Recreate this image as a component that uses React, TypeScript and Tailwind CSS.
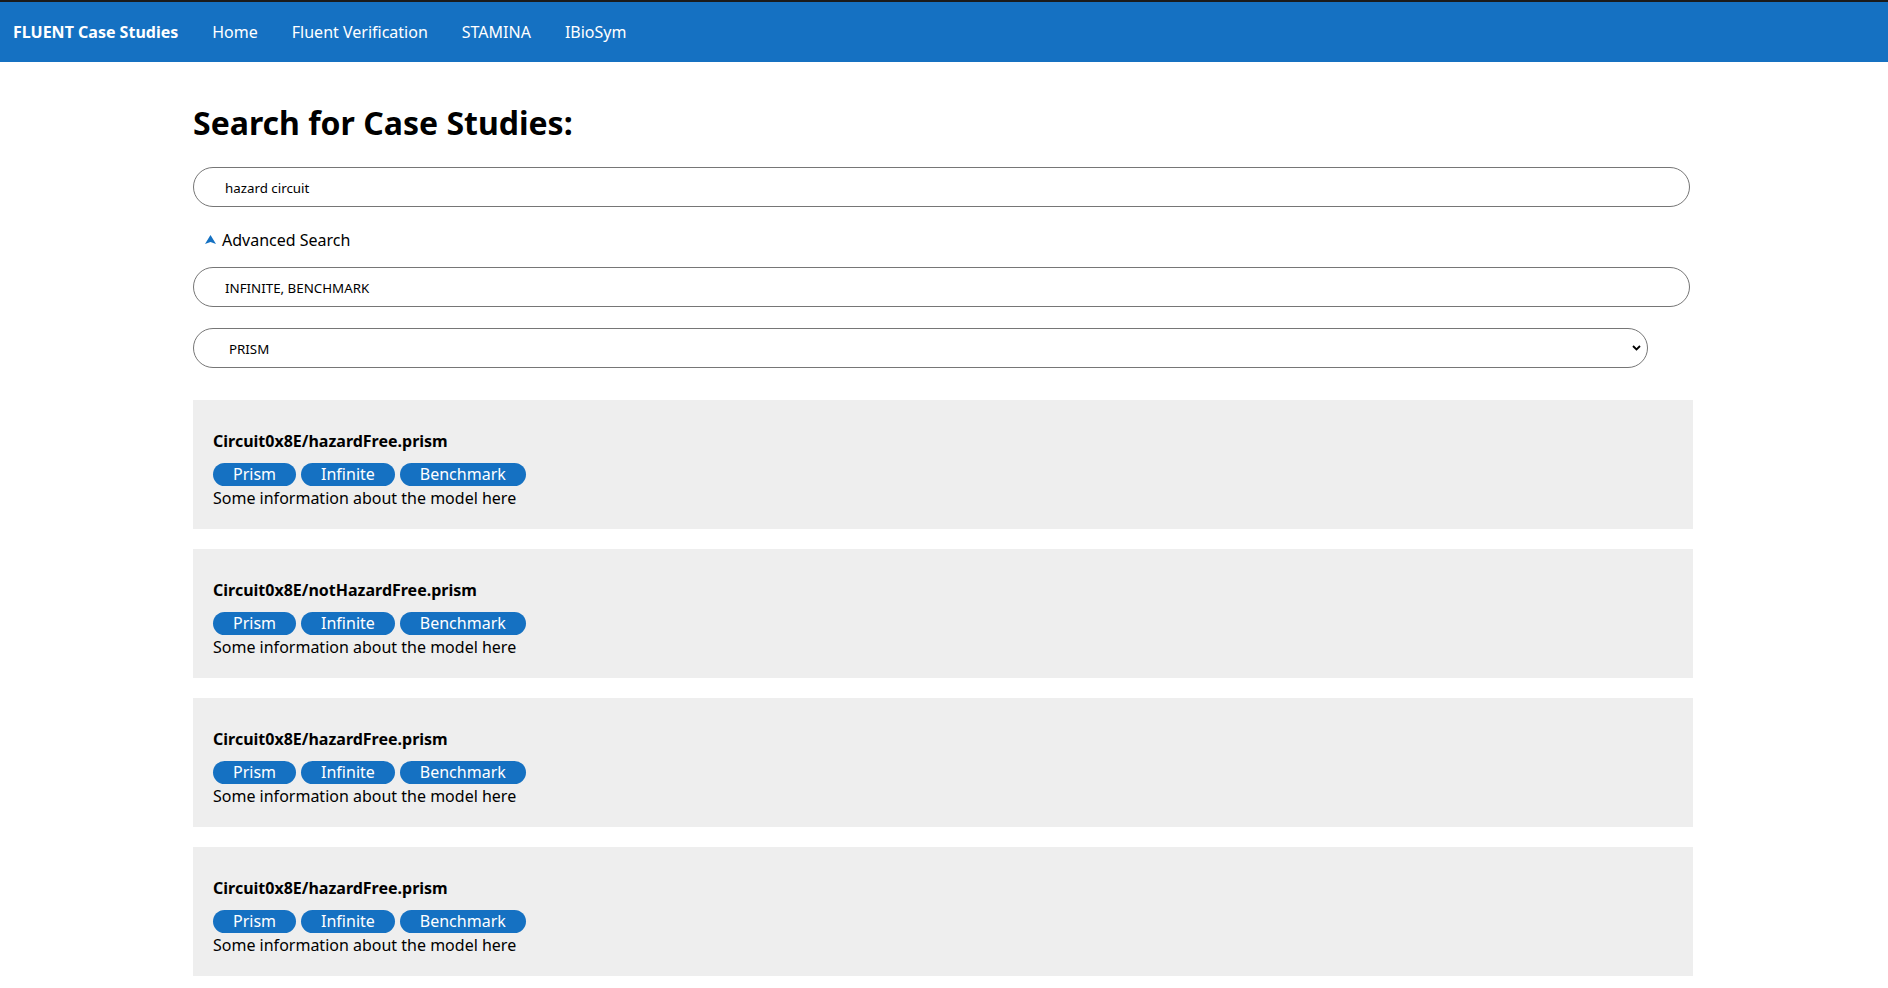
import React from "react";

const cards = [
  "Circuit0x8E/hazardFree.prism",
  "Circuit0x8E/notHazardFree.prism",
  "Circuit0x8E/hazardFree.prism",
  "Circuit0x8E/hazardFree.prism",
];

function Badge({ children }: { children: React.ReactNode }) {
  return (
    <span className="inline-flex items-center h-[23px] px-[20px] rounded-full bg-[#1571c2] text-white text-[16px] leading-[23px]">
      {children}
    </span>
  );
}

export default function App() {
  return (
    <div className="min-h-screen bg-white text-black font-['Noto_Sans',sans-serif]">
      <header className="border-t-2 border-[#1b1b1b] bg-[#1571c2] h-[62px] flex items-center pl-[13px] text-white text-[16px] leading-[22px]">
        <span className="font-bold">FLUENT Case Studies</span>
        <nav className="flex items-center gap-[34px] ml-[34px]">
          <span>Home</span>
          <span>Fluent Verification</span>
          <span>STAMINA</span>
          <span>IBioSym</span>
        </nav>
      </header>

      <main className="ml-[193px] w-[1500px] pt-[39px]">
        <h1 className="text-[32px] font-bold leading-[43.6px]">Search for Case Studies:</h1>

        <input
          readOnly
          value="hazard circuit"
          className="mt-[22px] block w-[1497px] h-[40px] rounded-full border border-[#767676] pl-[31px] pt-[2px] text-[13.33px] text-black outline-none font-['Noto_Sans',sans-serif]"
        />

        <div className="mt-[22px] flex items-center h-[22px] pl-[12px] text-[16px] leading-[22px]">
          <svg width="11" height="9" viewBox="0 0 11 9" className="mr-[6px]">
            <path d="M5.5 0 L11 9 L5.5 7 L0 9 Z" fill="#1571c2" />
          </svg>
          <span>Advanced Search</span>
        </div>

        <input
          readOnly
          value="INFINITE, BENCHMARK"
          className="mt-[16px] block w-[1497px] h-[40px] rounded-full border border-[#767676] pl-[31px] pt-[2px] text-[13.33px] text-black outline-none font-['Noto_Sans',sans-serif]"
        />

        <div className="relative mt-[21px] w-[1455px] h-[40px]">
          <select
            defaultValue="PRISM"
            className="appearance-none block w-full h-full rounded-full border border-[#767676] pl-[35px] pt-[4px] text-[13.33px] text-black bg-white outline-none font-['Noto_Sans',sans-serif]"
          >
            <option value="PRISM">PRISM</option>
            <option value="JANI">JANI</option>
          </select>
          <svg
            width="9"
            height="6"
            viewBox="0 0 9 6"
            className="absolute right-[7px] top-[17px] pointer-events-none"
          >
            <path d="M1 1 L4.5 4.5 L8 1" fill="none" stroke="#000" strokeWidth="1.8" />
          </svg>
        </div>

        <div className="mt-[32px] flex flex-col gap-[20.3px]">
          {cards.map((title, i) => (
            <div key={i} className="bg-[#eeeeee] h-[129px] pt-[30px] px-[20px]">
              <div className="font-bold text-[16px] leading-[22px]">{title}</div>
              <div className="mt-[11px] flex gap-[5px]">
                <Badge>Prism</Badge>
                <Badge>Infinite</Badge>
                <Badge>Benchmark</Badge>
              </div>
              <div className="mt-[1px] text-[16px] leading-[22px]">Some information about the model here</div>
            </div>
          ))}
        </div>
      </main>
    </div>
  );
}
